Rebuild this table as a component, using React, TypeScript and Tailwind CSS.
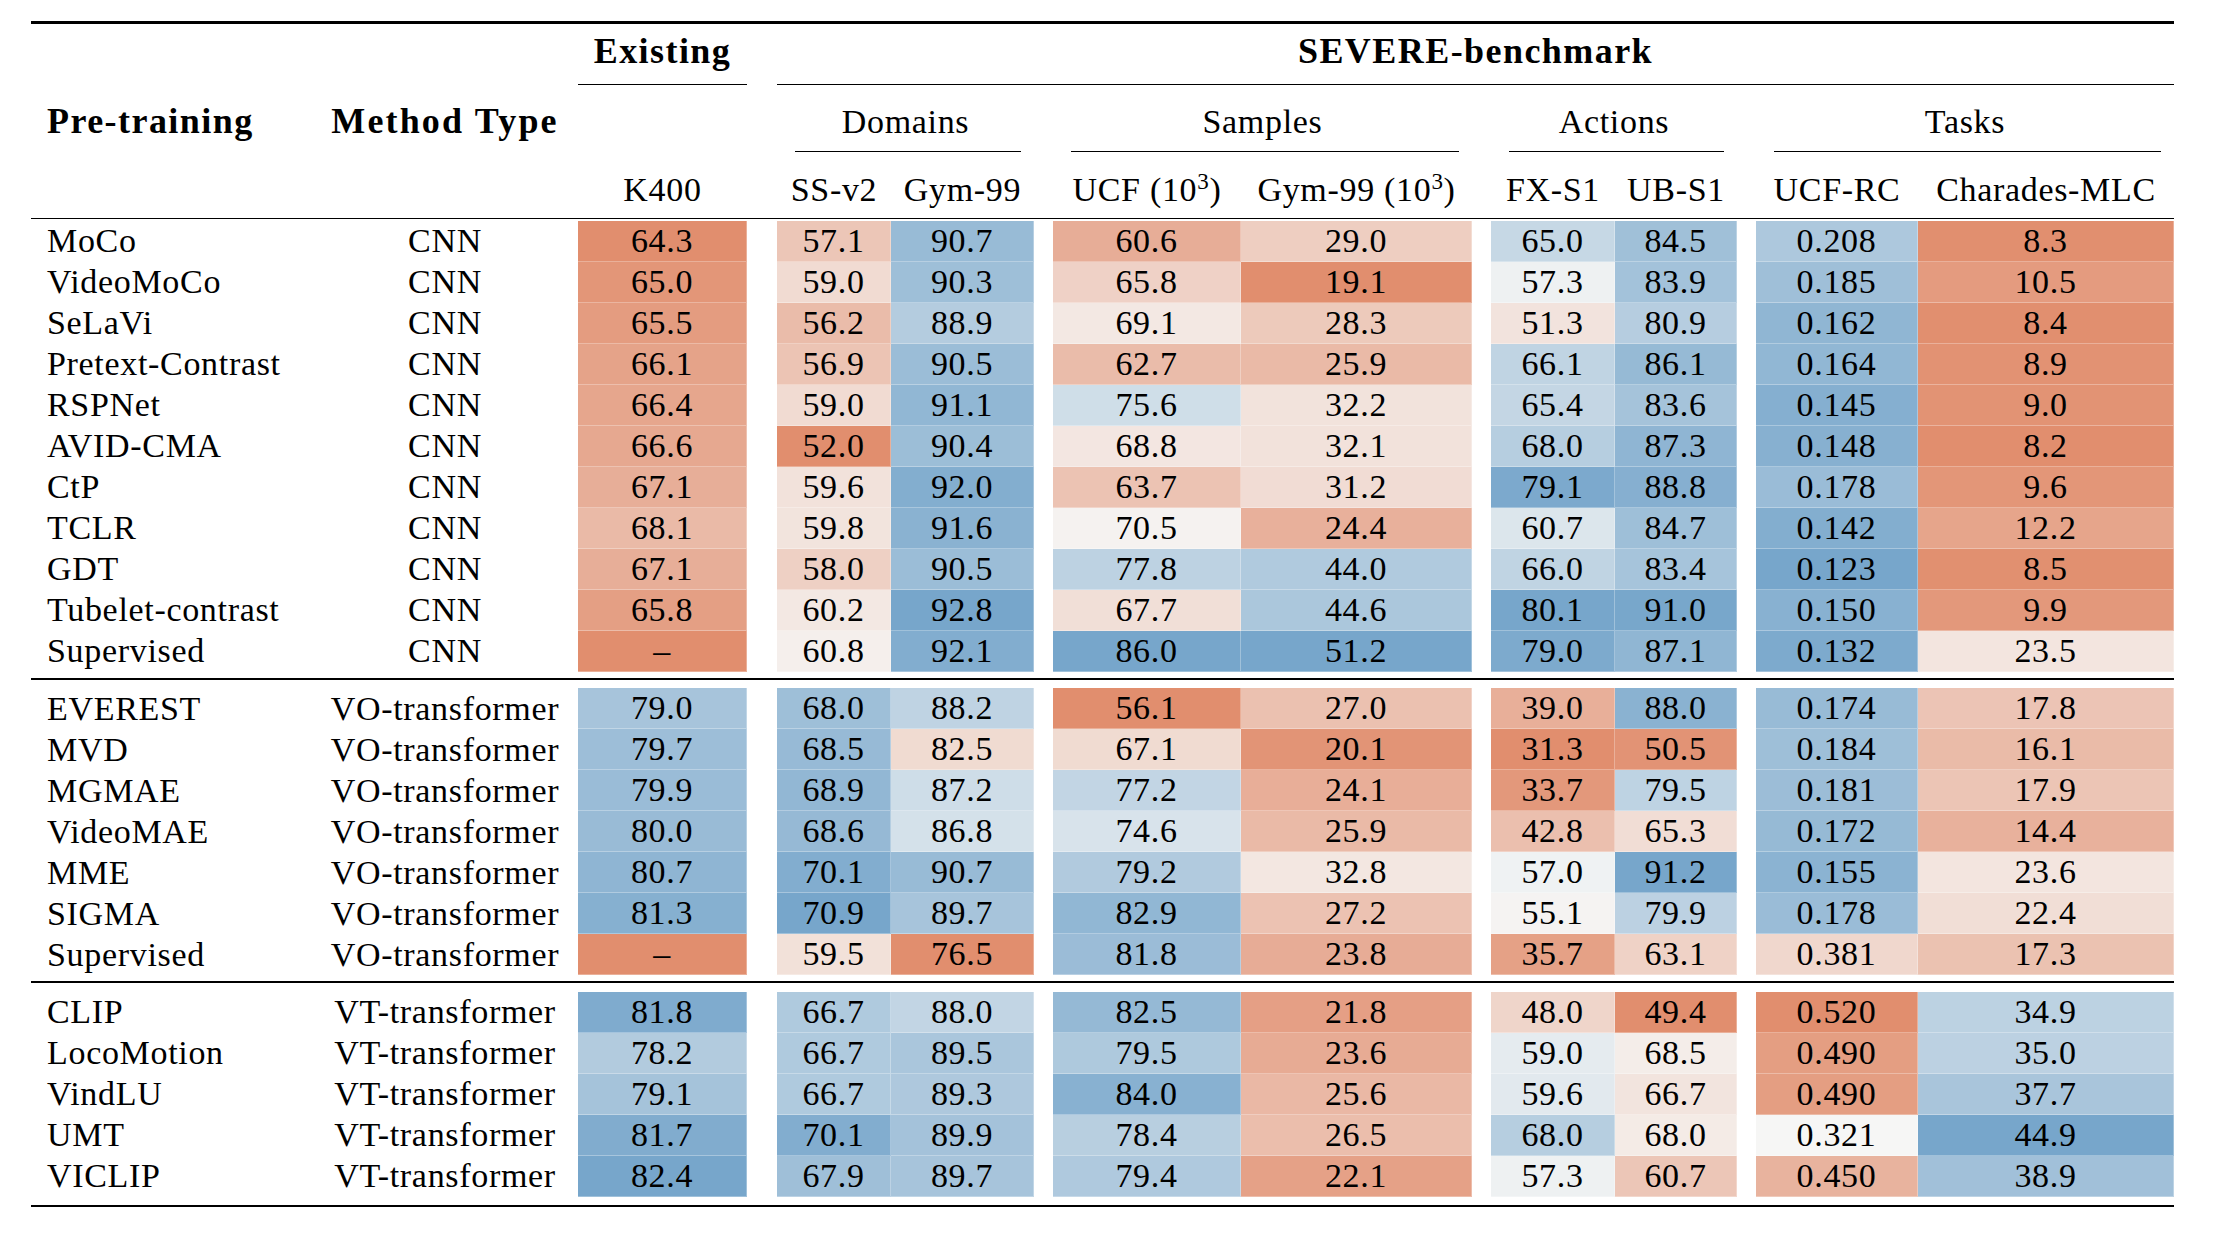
import React from "react";

// column track widths, measured off the reference
const GRID =
  "grid grid-cols-[289px_250px_8px_169px_30px_114px_143px_19px_188px_231px_19px_124px_122px_19px_162px_256px]";

type Row = { name: string; type: string; v: (number | null)[] };

const groups: Row[][] = [
  [
    { name: "MoCo", type: "CNN", v: [64.3, 57.1, 90.7, 60.6, 29.0, 65.0, 84.5, 0.208, 8.3] },
    { name: "VideoMoCo", type: "CNN", v: [65.0, 59.0, 90.3, 65.8, 19.1, 57.3, 83.9, 0.185, 10.5] },
    { name: "SeLaVi", type: "CNN", v: [65.5, 56.2, 88.9, 69.1, 28.3, 51.3, 80.9, 0.162, 8.4] },
    { name: "Pretext-Contrast", type: "CNN", v: [66.1, 56.9, 90.5, 62.7, 25.9, 66.1, 86.1, 0.164, 8.9] },
    { name: "RSPNet", type: "CNN", v: [66.4, 59.0, 91.1, 75.6, 32.2, 65.4, 83.6, 0.145, 9.0] },
    { name: "AVID-CMA", type: "CNN", v: [66.6, 52.0, 90.4, 68.8, 32.1, 68.0, 87.3, 0.148, 8.2] },
    { name: "CtP", type: "CNN", v: [67.1, 59.6, 92.0, 63.7, 31.2, 79.1, 88.8, 0.178, 9.6] },
    { name: "TCLR", type: "CNN", v: [68.1, 59.8, 91.6, 70.5, 24.4, 60.7, 84.7, 0.142, 12.2] },
    { name: "GDT", type: "CNN", v: [67.1, 58.0, 90.5, 77.8, 44.0, 66.0, 83.4, 0.123, 8.5] },
    { name: "Tubelet-contrast", type: "CNN", v: [65.8, 60.2, 92.8, 67.7, 44.6, 80.1, 91.0, 0.15, 9.9] },
    { name: "Supervised", type: "CNN", v: [null, 60.8, 92.1, 86.0, 51.2, 79.0, 87.1, 0.132, 23.5] },
  ],
  [
    { name: "EVEREST", type: "VO-transformer", v: [79.0, 68.0, 88.2, 56.1, 27.0, 39.0, 88.0, 0.174, 17.8] },
    { name: "MVD", type: "VO-transformer", v: [79.7, 68.5, 82.5, 67.1, 20.1, 31.3, 50.5, 0.184, 16.1] },
    { name: "MGMAE", type: "VO-transformer", v: [79.9, 68.9, 87.2, 77.2, 24.1, 33.7, 79.5, 0.181, 17.9] },
    { name: "VideoMAE", type: "VO-transformer", v: [80.0, 68.6, 86.8, 74.6, 25.9, 42.8, 65.3, 0.172, 14.4] },
    { name: "MME", type: "VO-transformer", v: [80.7, 70.1, 90.7, 79.2, 32.8, 57.0, 91.2, 0.155, 23.6] },
    { name: "SIGMA", type: "VO-transformer", v: [81.3, 70.9, 89.7, 82.9, 27.2, 55.1, 79.9, 0.178, 22.4] },
    { name: "Supervised", type: "VO-transformer", v: [null, 59.5, 76.5, 81.8, 23.8, 35.7, 63.1, 0.381, 17.3] },
  ],
  [
    { name: "CLIP", type: "VT-transformer", v: [81.8, 66.7, 88.0, 82.5, 21.8, 48.0, 49.4, 0.52, 34.9] },
    { name: "LocoMotion", type: "VT-transformer", v: [78.2, 66.7, 89.5, 79.5, 23.6, 59.0, 68.5, 0.49, 35.0] },
    { name: "VindLU", type: "VT-transformer", v: [79.1, 66.7, 89.3, 84.0, 25.6, 59.6, 66.7, 0.49, 37.7] },
    { name: "UMT", type: "VT-transformer", v: [81.7, 70.1, 89.9, 78.4, 26.5, 68.0, 68.0, 0.321, 44.9] },
    { name: "VICLIP", type: "VT-transformer", v: [82.4, 67.9, 89.7, 79.4, 22.1, 57.3, 60.7, 0.45, 38.9] },
  ],
];

// UCF-RC is an error, lower is better
const lowerBetter = [false, false, false, false, false, false, false, true, false];
const decimals = [1, 1, 1, 1, 1, 1, 1, 3, 1];

const all = groups.flat();
const ranges = lowerBetter.map((_, c) => {
  const vals = all.map((r) => r.v[c]).filter((x): x is number => x !== null);
  return [Math.min(...vals), Math.max(...vals)];
});

const RED = [225, 142, 110];
const MID = [246, 246, 245];
const BLUE = [119, 166, 203];

function mix(a: number[], b: number[], f: number) {
  return a.map((x, i) => Math.round(x + (b[i] - x) * f));
}

function heat(c: number, v: number | null) {
  if (v === null) return `rgb(${RED.join(",")})`;
  const [lo, hi] = ranges[c];
  let t = (v - lo) / (hi - lo);
  if (lowerBetter[c]) t = 1 - t;
  const rgb = t < 0.5 ? mix(RED, MID, t / 0.5) : mix(MID, BLUE, (t - 0.5) / 0.5);
  return `rgb(${rgb.join(",")})`;
}

function Cell({ c, v }: { c: number; v: number | null }) {
  return (
    <div
      className="flex items-center justify-center border-b border-r border-white/30"
      style={{ background: heat(c, v) }}
    >
      {v === null ? "–" : v.toFixed(decimals[c])}
    </div>
  );
}

function DataRow({ row }: { row: Row }) {
  const v = row.v;
  return (
    <div className={`${GRID} h-[41px] overflow-hidden`}>
      <div className="flex items-center pl-4">{row.name}</div>
      <div className="flex items-center justify-center">{row.type}</div>
      <div />
      <Cell c={0} v={v[0]} />
      <div />
      <Cell c={1} v={v[1]} />
      <Cell c={2} v={v[2]} />
      <div />
      <Cell c={3} v={v[3]} />
      <Cell c={4} v={v[4]} />
      <div />
      <Cell c={5} v={v[5]} />
      <Cell c={6} v={v[6]} />
      <div />
      <Cell c={7} v={v[7]} />
      <Cell c={8} v={v[8]} />
    </div>
  );
}

function GroupHead({ label, start }: { label: string; start: string }) {
  return (
    <div className={`${start} col-span-2 flex flex-col`}>
      <div className="flex flex-1 items-center justify-center pt-[9px]">{label}</div>
      <div className="ml-[18px] mr-[13px] h-px bg-black" />
    </div>
  );
}

function Sup() {
  return <sup className="text-[23px]">3</sup>;
}

export default function App() {
  return (
    <div className="h-[1240px] w-[2218px] bg-white pt-[21px] font-[family-name:Liberation_Serif,serif] text-[34px] leading-[1.1] tracking-[0.02em] text-black">
      <div className="ml-[31px] w-[2143px]">
        <div className="h-[2.5px] bg-black" />

        {/* header row 1 */}
        <div className={`${GRID} h-[61px]`}>
          <div className="col-start-4 flex items-center justify-center border-b border-black pb-[3px] text-[36px] font-bold tracking-[0.04em]">
            Existing
          </div>
          <div className="col-start-6 col-span-11 flex items-center justify-center border-b border-black pb-[3px] text-[36px] font-bold tracking-[0.04em]">
            SEVERE-benchmark
          </div>
        </div>

        {/* header row 2 */}
        <div className={`${GRID} h-[67px]`}>
          <div className="flex items-center pl-4 pt-[8px] text-[36px] font-bold tracking-[0.04em]">Pre-training</div>
          <div className="flex items-center justify-center pt-[8px] text-[36px] font-bold tracking-[0.06em]">
            Method Type
          </div>
          <GroupHead label="Domains" start="col-start-6" />
          <GroupHead label="Samples" start="col-start-9" />
          <GroupHead label="Actions" start="col-start-12" />
          <GroupHead label="Tasks" start="col-start-15" />
        </div>

        {/* header row 3 */}
        <div className={`${GRID} h-[66px] items-center pt-[10px] text-center`}>
          <div />
          <div />
          <div />
          <div>K400</div>
          <div />
          <div>SS-v2</div>
          <div>Gym-99</div>
          <div />
          <div>
            UCF (10<Sup />)
          </div>
          <div>
            Gym-99 (10<Sup />)
          </div>
          <div />
          <div>FX-S1</div>
          <div>UB-S1</div>
          <div />
          <div>UCF-RC</div>
          <div>Charades-MLC</div>
        </div>

        <div className="h-[1.5px] bg-black" />

        <div className="mt-[1.5px]">
          {groups[0].map((r) => (
            <DataRow key={r.name + r.type} row={r} />
          ))}
        </div>
        <div className="mt-[6px] h-[2px] bg-black" />
        <div className="mt-[8.5px]">
          {groups[1].map((r) => (
            <DataRow key={r.name + r.type} row={r} />
          ))}
        </div>
        <div className="mt-[6px] h-[2px] bg-black" />
        <div className="mt-[8.5px]">
          {groups[2].map((r) => (
            <DataRow key={r.name + r.type} row={r} />
          ))}
        </div>
        <div className="mt-[8px] h-[2.5px] bg-black" />
      </div>
    </div>
  );
}
